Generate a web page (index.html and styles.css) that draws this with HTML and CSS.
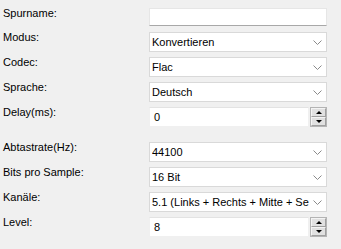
FILE: index.html
```html
<!DOCTYPE html>
<html lang="de">
<head>
<meta charset="UTF-8">
<title>Spur bearbeiten</title>
<link rel="stylesheet" href="styles.css">
</head>
<body>
  <div class="form">
    <div class="row first">
      <span class="label">Spurname:</span>
      <div class="edit tall"></div>
    </div>
    <div class="row">
      <span class="label">Modus:</span>
      <div class="combo"><span class="value">Konvertieren</span><svg class="chev" width="9" height="5"><polyline points="0.5,0.5 4.5,4.5 8.5,0.5" /></svg></div>
    </div>
    <div class="row">
      <span class="label">Codec:</span>
      <div class="combo"><span class="value">Flac</span><svg class="chev" width="9" height="5"><polyline points="0.5,0.5 4.5,4.5 8.5,0.5" /></svg></div>
    </div>
    <div class="row">
      <span class="label">Sprache:</span>
      <div class="combo"><span class="value">Deutsch</span><svg class="chev" width="9" height="5"><polyline points="0.5,0.5 4.5,4.5 8.5,0.5" /></svg></div>
    </div>
    <div class="row">
      <span class="label">Delay(ms):</span>
      <div class="spin">
        <div class="edit num">0</div>
        <div class="arrows">
          <div class="btn"><span class="up"></span></div>
          <div class="btn"><span class="down"></span></div>
        </div>
      </div>
    </div>

    <div class="row section">
      <span class="label">Abtastrate(Hz):</span>
      <div class="combo"><span class="value">44100</span><svg class="chev" width="9" height="5"><polyline points="0.5,0.5 4.5,4.5 8.5,0.5" /></svg></div>
    </div>
    <div class="row">
      <span class="label">Bits pro Sample:</span>
      <div class="combo"><span class="value">16 Bit</span><svg class="chev" width="9" height="5"><polyline points="0.5,0.5 4.5,4.5 8.5,0.5" /></svg></div>
    </div>
    <div class="row">
      <span class="label">Kanäle:</span>
      <div class="combo"><span class="value">5.1 (Links + Rechts + Mitte + Se</span><svg class="chev" width="9" height="5"><polyline points="0.5,0.5 4.5,4.5 8.5,0.5" /></svg></div>
    </div>
    <div class="row">
      <span class="label">Level:</span>
      <div class="spin">
        <div class="edit num">8</div>
        <div class="arrows">
          <div class="btn"><span class="up"></span></div>
          <div class="btn"><span class="down"></span></div>
        </div>
      </div>
    </div>
  </div>
</body>
</html>
```

FILE: styles.css
```css
body {
  margin: 0;
  background-color: #f0f0f0;
  font-family: "Liberation Sans", Arial, sans-serif;
  font-size: 11px;
  color: #000;
}

.form {
  display: flex;
  flex-direction: column;
  gap: 5px;
  padding: 8px 0 0 3px;
}

.row {
  display: flex;
  align-items: flex-start;
}

.row.first {
  margin-bottom: 1px;
}

.row.section {
  margin-top: 10px;
}

.label {
  width: 146px;
  line-height: 13px;
  margin-top: -1px;
}

.edit {
  width: 178px;
  height: 20px;
  box-sizing: border-box;
  background-color: #fff;
  border: 1px solid #e6e6e6;
  line-height: 18px;
}

.edit.tall {
  height: 18px;
  border-bottom-color: #a8a8a8;
}

.combo {
  width: 178px;
  height: 20px;
  box-sizing: border-box;
  background-color: #fff;
  border: 1px solid #d9d9d9;
  display: flex;
  align-items: center;
  padding: 0 4px 0 2px;
  gap: 3px;
}

.combo .value {
  flex: 1;
  white-space: nowrap;
  overflow: hidden;
  line-height: 18px;
}

.chev {
  flex: none;
  margin-top: 1px;
}

.chev polyline {
  fill: none;
  stroke: #8a8a8a;
  stroke-width: 1;
}

/* Zahlenfeld mit Pfeilen */
.spin {
  width: 178px;
  display: flex;
  gap: 1px;
}

.spin .edit {
  flex: 1;
  width: auto;
  padding-left: 4px;
  border-color: #f0f0f0;
  border-top-color: #e3e3e3;
}

.arrows {
  width: 17px;
  height: 20px;
  box-sizing: border-box;
  border: 1px solid #b4b4b4;
  background-color: #e1e1e1;
  display: flex;
  flex-direction: column;
}

.btn {
  flex: 1;
  display: flex;
  align-items: center;
  justify-content: center;
  border: 1px solid #f4f4f4;
  border-right-color: #a0a0a0;
  border-bottom-color: #a0a0a0;
}

.up,
.down {
  width: 0;
  height: 0;
  border-left: 3px solid transparent;
  border-right: 3px solid transparent;
}

.up {
  border-bottom: 3px solid #000;
}

.down {
  border-top: 3px solid #000;
}
```
